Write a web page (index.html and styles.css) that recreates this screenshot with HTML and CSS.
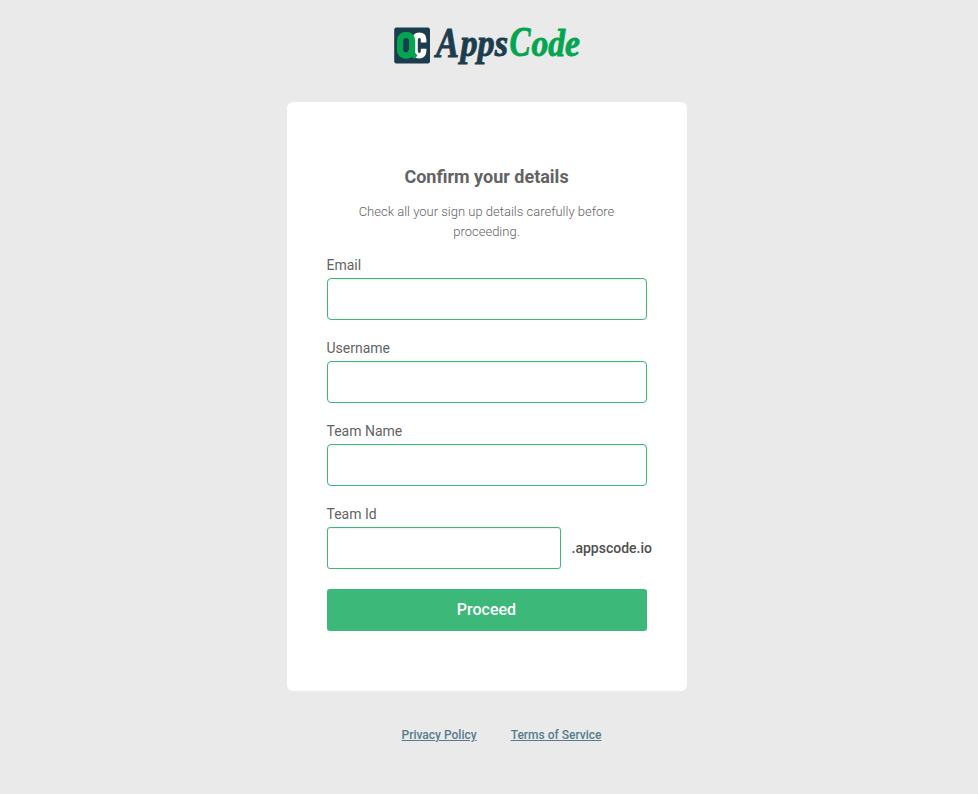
FILE: index.html
```html
<!DOCTYPE html>
<html lang="en">
<head>
<meta charset="utf-8">
<title>AppsCode</title>
<link rel="stylesheet" href="styles.css">
</head>
<body>
<main class="page">
  <svg class="logo" width="200" height="60" viewBox="392 16 200 60" role="img" aria-label="AppsCode">
    <rect x="394.2" y="27.6" width="35.8" height="35.8" rx="2.2" fill="#1c3d4d"/>
    <path d="M423.6 42.6V39.5C423.6 36.8 422 35.2 419.2 35.2C416.2 35.2 415 37 415 40V50C415 53.5 416.4 55.8 419.3 55.8C422 55.8 423.6 53.8 423.6 51V48.8" fill="none" stroke="#fff" stroke-width="5.6"/>
    <rect x="400.1" y="35.2" width="12" height="20.3" rx="5.2" fill="none" stroke="#04a550" stroke-width="6.3"/>
    <path d="M409.5 49.5L415.6 57.4" fill="none" stroke="#04a550" stroke-width="5"/>
    <text class="wordmark capital apps" x="436" y="56.5" textLength="23" lengthAdjust="spacingAndGlyphs">A</text>
    <text class="wordmark apps" x="460.5" y="56.3" textLength="47.5" lengthAdjust="spacingAndGlyphs">pps</text>
    <text class="wordmark capital code" x="509.5" y="56.3" textLength="21" lengthAdjust="spacingAndGlyphs">C</text>
    <text class="wordmark code" x="531.5" y="56.3" textLength="48.5" lengthAdjust="spacingAndGlyphs">ode</text>
  </svg>
  <form class="card">
    <h1 class="title">Confirm your details</h1>
    <p class="intro">Check all your sign up details carefully before proceeding.</p>
    <div class="field">
      <label class="label" for="email">Email</label>
      <input class="input" id="email" type="text">
    </div>
    <div class="field">
      <label class="label" for="username">Username</label>
      <input class="input" id="username" type="text">
    </div>
    <div class="field">
      <label class="label" for="team">Team Name</label>
      <input class="input" id="team" type="text">
    </div>
    <div class="field">
      <label class="label" for="teamid">Team Id</label>
      <div class="domain-row">
        <input class="input domain-input" id="teamid" type="text">
        <span class="domain">.appscode.io</span>
      </div>
    </div>
    <button class="button" type="button">Proceed</button>
  </form>
  <footer class="links">
    <a class="link" href="#">Privacy Policy</a>
    <a class="link" href="#">Terms of Service</a>
  </footer>
</main>
</body>
</html>
```
FILE: styles.css
```css
* { box-sizing: border-box; }

body {
  margin: 0;
  min-height: 794px;
  background: #eaeaea;
  font-family: Roboto, "Liberation Sans", sans-serif;
  color: #636363;
}

.page {
  width: 973px;
  padding-top: 16px;
  display: flex;
  flex-direction: column;
  align-items: center;
}

.logo {
  display: block;
  margin-left: 11px;
}

.wordmark {
  font-family: "Liberation Serif", serif;
  font-size: 38px;
  font-weight: 700;
  font-style: italic;
  stroke-width: 0.9px;
}

.capital { font-size: 42px; }

.apps { fill: #1c3d4d; stroke: #1c3d4d; }
.code { fill: #04a550; stroke: #04a550; }

.card {
  width: 400px;
  height: 589px;
  margin-top: 26px;
  padding: 62px 40px 0;
  background: #fff;
  border-radius: 6px;
}

.title {
  margin: 0 0 13px;
  font-size: 18px;
  font-weight: 700;
  line-height: 25px;
  text-align: center;
}

.intro {
  margin: 0 0 13px;
  padding: 0 30px;
  font-size: 13px;
  font-weight: 300;
  line-height: 20px;
  text-align: center;
}

.field { margin-bottom: 18px; }

.label {
  display: block;
  height: 21px;
  margin-bottom: 2px;
  font-size: 14px;
  line-height: 21px;
}

.input {
  display: block;
  width: 100%;
  height: 42px;
  padding: 0 10px;
  border: 1px solid #3cb878;
  border-radius: 4px;
  background: #fff;
  box-shadow: inset 0 1px 2px rgba(10, 10, 10, 0.06);
  font: inherit;
  outline: none;
}

.domain-row {
  display: flex;
  align-items: center;
}

.domain-input {
  flex: none;
  width: 234px;
  border-radius: 3px;
}

.domain {
  margin-left: 11px;
  font-size: 14px;
  font-weight: 500;
  color: #4f4f4f;
}

.button {
  display: block;
  width: 100%;
  height: 42px;
  margin: 20px 0 0;
  border: 0;
  border-radius: 3px;
  background: #3cb878;
  color: #fff;
  font: 500 16px/42px Roboto, sans-serif;
  padding: 0;
}

.links {
  display: flex;
  gap: 34px;
  margin: 36px 0 0 30px;
}

.link {
  font-size: 12px;
  font-weight: 500;
  line-height: 16px;
  color: #577d8c;
  text-decoration: underline;
}
```
